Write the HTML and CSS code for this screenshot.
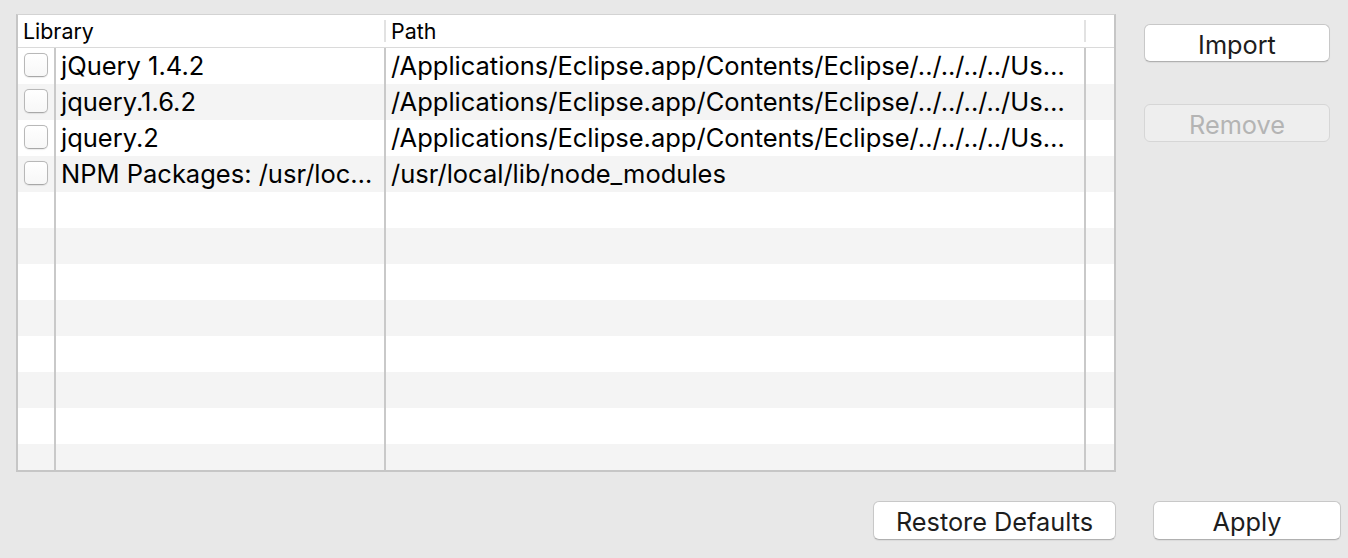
FILE: index.html
```html
<!DOCTYPE html>
<html lang="en">
<head>
<meta charset="utf-8">
<title>Libraries</title>
<link rel="stylesheet" href="styles.css">
</head>
<body>
<div class="page">
  <div class="main">
    <div class="table">
      <div class="thead">
        <div class="th">Library</div>
        <span class="hsep"></span>
        <div class="th">Path</div>
        <span class="hsep"></span>
        <div class="th"></div>
      </div>
      <div class="tbody">
        <div class="tr">
          <div class="td cb"><span class="check"></span></div>
          <div class="td">jQuery 1.4.2</div>
          <div class="td">/Applications/Eclipse.app/Contents/Eclipse/../../../../Us…</div>
          <div class="td last"></div>
        </div>
        <div class="tr">
          <div class="td cb"><span class="check"></span></div>
          <div class="td">jquery.1.6.2</div>
          <div class="td">/Applications/Eclipse.app/Contents/Eclipse/../../../../Us…</div>
          <div class="td last"></div>
        </div>
        <div class="tr">
          <div class="td cb"><span class="check"></span></div>
          <div class="td">jquery.2</div>
          <div class="td">/Applications/Eclipse.app/Contents/Eclipse/../../../../Us…</div>
          <div class="td last"></div>
        </div>
        <div class="tr">
          <div class="td cb"><span class="check"></span></div>
          <div class="td">NPM Packages: /usr/loc…</div>
          <div class="td">/usr/local/lib/node_modules</div>
          <div class="td last"></div>
        </div>
        <div class="tr"><div class="td cb"></div><div class="td"></div><div class="td"></div><div class="td last"></div></div>
        <div class="tr"><div class="td cb"></div><div class="td"></div><div class="td"></div><div class="td last"></div></div>
        <div class="tr"><div class="td cb"></div><div class="td"></div><div class="td"></div><div class="td last"></div></div>
        <div class="tr"><div class="td cb"></div><div class="td"></div><div class="td"></div><div class="td last"></div></div>
        <div class="tr"><div class="td cb"></div><div class="td"></div><div class="td"></div><div class="td last"></div></div>
        <div class="tr"><div class="td cb"></div><div class="td"></div><div class="td"></div><div class="td last"></div></div>
        <div class="tr"><div class="td cb"></div><div class="td"></div><div class="td"></div><div class="td last"></div></div>
        <div class="tr"><div class="td cb"></div><div class="td"></div><div class="td"></div><div class="td last"></div></div>
      </div>
    </div>
    <div class="side">
      <button class="btn side-btn" type="button">Import</button>
      <button class="btn side-btn" type="button" disabled>Remove</button>
    </div>
  </div>
  <div class="footer">
    <button class="btn restore" type="button">Restore Defaults</button>
    <button class="btn apply" type="button">Apply</button>
  </div>
</div>
</body>
</html>
```
FILE: styles.css
```css
* { box-sizing: border-box; }
html, body {
  margin: 0;
  padding: 0;
  background: #e8e8e8;
  height: 100%;
  overflow: hidden;
}
body {
  font-family: Inter, "Liberation Sans", sans-serif;
  color: #000;
}
.page {
  display: flex;
  flex-direction: column;
  padding-top: 14px;
}
.main {
  display: flex;
  align-items: flex-start;
  padding-left: 16px;
  gap: 28px;
}
.table {
  width: 1100px;
  height: 458px;
  background: #fff;
  border-top: 1px solid #d3d3d3;
  border-left: 2px solid #c6c6c6;
  border-right: 2px solid #c6c6c6;
  border-bottom: 2px solid #c6c6c6;
  overflow: hidden;
  display: flex;
  flex-direction: column;
}
.thead {
  display: grid;
  grid-template-columns: 366px 2px 698px 2px 1fr;
  height: 33px;
  flex: none;
  border-bottom: 1px solid #dadada;
  align-items: center;
}
.th {
  font-size: 21.4px;
  line-height: 30px;
  padding-left: 5px;
  white-space: nowrap;
}
.hsep {
  height: 22px;
  background: #e2e2e2;
}
.tbody {
  display: flex;
  flex-direction: column;
}
.tr {
  display: grid;
  grid-template-columns: 38px 330px 700px 1fr;
  height: 36px;
  flex: none;
  background: #fff;
}
.tr:nth-child(even) { background: #f4f4f4; }
.td {
  border-right: 2px solid #c9c9c9;
  font-size: 25.5px;
  line-height: 36px;
  padding-left: 5px;
  white-space: nowrap;
  overflow: hidden;
}
.td.last { border-right: none; }
.td.cb {
  padding-left: 0;
  display: flex;
  align-items: center;
  justify-content: center;
  padding-bottom: 2px;
}
.check {
  width: 24px;
  height: 24px;
  border-radius: 5px;
  border: 1px solid #b8b8b8;
  border-bottom-color: #a8a8a8;
  background: linear-gradient(#ffffff, #f7f7f7);
  box-shadow: 0 0.5px 1px rgba(0, 0, 0, 0.08);
  margin-left: -1px;
}
.side {
  display: flex;
  flex-direction: column;
  padding-top: 10px;
  gap: 42px;
}
.btn {
  font-family: Inter, "Liberation Sans", sans-serif;
  font-size: 25.3px;
  color: #1d1d1d;
  background: #fff;
  border: 1px solid #c8c8c8;
  border-bottom-color: #b0b0b0;
  border-radius: 6px;
  box-shadow: 0 1px 1px rgba(0, 0, 0, 0.06);
  padding: 3px 0 0;
  line-height: 1;
  display: flex;
  align-items: center;
  justify-content: center;
}
.side-btn {
  width: 186px;
  height: 38px;
}
.btn:disabled {
  background: #eeeeee;
  color: #b4b4b4;
  border-color: #d6d6d6;
  box-shadow: none;
}
.footer {
  display: flex;
  justify-content: flex-end;
  gap: 37px;
  padding-top: 29px;
  padding-right: 7px;
}
.restore {
  width: 243px;
  height: 39px;
}
.apply {
  width: 188px;
  height: 39px;
}
```
